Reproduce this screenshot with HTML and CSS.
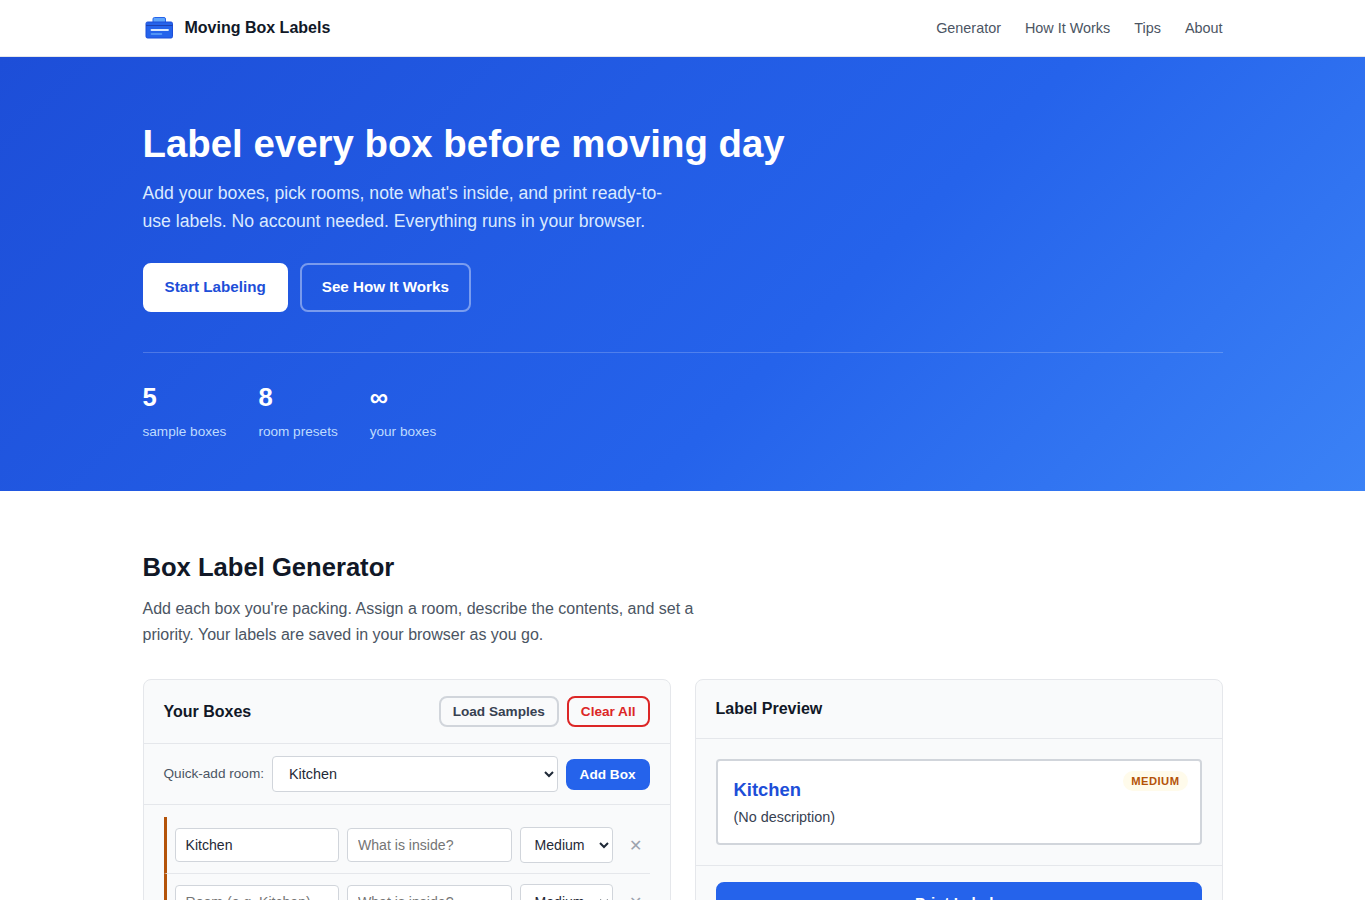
FILE: index.html
```html
<!DOCTYPE html>
<html lang="en">
<head>
  <meta charset="UTF-8">
  <meta name="viewport" content="width=device-width, initial-scale=1.0">
  <title>Moving Box Labels</title>
  <link rel="stylesheet" href="styles.css">
</head>
<body>
  <header class="site-header">
    <div class="container header-inner">
      <a class="logo" href="#">
        <svg width="32" height="32" viewBox="0 0 32 32" fill="none" aria-hidden="true">
          <rect x="10" y="5.5" width="12.5" height="6" rx="1.5" fill="#60a5fa" stroke="#2563eb"/>
          <rect x="3" y="10" width="26.5" height="16" rx="1.5" fill="#2563eb" stroke="#1d4ed8"/>
          <path d="M3 13.5h26.500" stroke="#1e40af"/>
          <path d="M8.500 18h16.500" stroke="#dbeafe" stroke-width="1.800" stroke-linecap="round"/>
          <path d="M8.500 22h10" stroke="#60a5fa" stroke-width="1.500" stroke-linecap="round"/>
        </svg>
        <span>Moving Box Labels</span>
      </a>
      <nav class="site-nav">
        <a href="#generator">Generator</a>
        <a href="#how">How It Works</a>
        <a href="#tips">Tips</a>
        <a href="#about">About</a>
      </nav>
    </div>
  </header>

  <section class="hero">
    <div class="container">
      <h1>Label every box before moving day</h1>
      <p class="hero-text">Add your boxes, pick rooms, note what's inside, and print ready-to-use labels. No account needed. Everything runs in your browser.</p>
      <div class="hero-actions">
        <a class="btn btn-white" href="#generator">Start Labeling</a>
        <a class="btn btn-ghost" href="#how">See How It Works</a>
      </div>
      <div class="hero-stats">
        <div class="stat"><strong>5</strong><span>sample boxes</span></div>
        <div class="stat"><strong>8</strong><span>room presets</span></div>
        <div class="stat"><strong>∞</strong><span>your boxes</span></div>
      </div>
    </div>
  </section>

  <section class="generator" id="generator">
    <div class="container">
      <h2>Box Label Generator</h2>
      <p class="section-text">Add each box you're packing. Assign a room, describe the contents, and set a priority. Your labels are saved in your browser as you go.</p>

      <div class="columns">
        <div class="panel">
          <div class="panel-header">
            <h3>Your Boxes</h3>
            <div class="panel-actions">
              <button class="btn btn-small btn-outline">Load Samples</button>
              <button class="btn btn-small btn-danger">Clear All</button>
            </div>
          </div>
          <div class="quick-add">
            <label for="quick-room">Quick-add room:</label>
            <select id="quick-room">
              <option>Kitchen</option>
              <option>Bedroom</option>
              <option>Bathroom</option>
            </select>
            <button class="btn btn-small btn-primary">Add Box</button>
          </div>
          <div class="box-list">
            <div class="box-row">
              <input type="text" value="Kitchen" placeholder="Room (e.g. Kitchen)">
              <input type="text" placeholder="What is inside?">
              <select>
                <option>High</option>
                <option selected>Medium</option>
                <option>Low</option>
              </select>
              <button class="remove" aria-label="Remove box">✕</button>
            </div>
            <div class="box-row">
              <input type="text" placeholder="Room (e.g. Kitchen)">
              <input type="text" placeholder="What is inside?">
              <select>
                <option>High</option>
                <option selected>Medium</option>
                <option>Low</option>
              </select>
              <button class="remove" aria-label="Remove box">✕</button>
            </div>
          </div>
        </div>

        <div class="panel">
          <div class="panel-header">
            <h3>Label Preview</h3>
          </div>
          <div class="preview">
            <div class="label-card">
              <span class="badge">Medium</span>
              <div class="label-room">Kitchen</div>
              <div class="label-desc">(No description)</div>
            </div>
          </div>
          <div class="panel-footer">
            <button class="btn btn-primary btn-block">Print Labels</button>
          </div>
        </div>
      </div>
    </div>
  </section>
</body>
</html>
```
FILE: styles.css
```css
* {
  box-sizing: border-box;
  margin: 0;
  padding: 0;
}
html, body {
  height: 100%;
}
body {
  font-family: "Liberation Sans", Arial, sans-serif;
  font-size: 16px;
  line-height: 1.6;
  color: #111827;
  background: #fff;
  overflow: hidden;
}
a {
  text-decoration: none;
}
.container {
  max-width: 1120px;
  margin: 0 auto;
  padding: 0 20px;
}

/* header */
.site-header {
  background: #fff;
  border-bottom: 1px solid #e5e7eb;
}
.header-inner {
  display: flex;
  align-items: center;
  justify-content: space-between;
  height: 56px;
}
.logo {
  display: flex;
  align-items: center;
  gap: 10px;
  font-weight: 700;
  color: #111827;
}
.site-nav {
  display: flex;
  gap: 24px;
  padding-top: 1px;
}
.site-nav a {
  font-size: 14.4px;
  color: #4b5563;
}

/* hero */
.hero {
  padding: 64px 0 48px;
  color: #fff;
  background: linear-gradient(135deg, #1d4ed8 0%, #2563eb 60%, #3b82f6 100%);
}
.hero h1 {
  font-size: 38.4px;
  line-height: 1.2;
  margin-bottom: 12px;
}
.hero-text {
  max-width: 540px;
  font-size: 17.6px;
  margin-bottom: 28px;
  color: #dbeafe;
}
.hero-actions {
  display: flex;
  gap: 12px;
  margin-bottom: 40px;
}
.hero-stats {
  display: flex;
  gap: 32px;
  padding-top: 24px;
  border-top: 1px solid rgba(255, 255, 255, 0.2);
}
.stat strong {
  display: block;
  font-size: 25.6px;
}
.stat span {
  font-size: 13.6px;
  color: #bfdbfe;
}

/* buttons */
.btn {
  display: inline-block;
  padding: 10px 20px;
  font-family: inherit;
  font-size: 15.2px;
  font-weight: 600;
  line-height: 1.6;
  text-align: center;
  border: 2px solid transparent;
  border-radius: 8px;
  cursor: pointer;
}
.btn-white {
  color: #1d4ed8;
  background: #fff;
  border-color: #fff;
}
.btn-ghost {
  color: #fff;
  border-color: rgba(255, 255, 255, 0.4);
}
.btn-small {
  padding: 6px 12px;
  font-size: 13.6px;
  line-height: 15px;
}
.btn-outline {
  color: #374151;
  background: transparent;
  border-color: #d1d5db;
}
.btn-danger {
  color: #dc2626;
  background: transparent;
  border-color: #dc2626;
}
.btn-primary {
  color: #fff;
  background: #2563eb;
  border-color: #2563eb;
}
.btn-block {
  display: block;
  width: 100%;
  line-height: 18px;
}

/* generator */
.generator {
  padding: 56px 0;
}
.generator h2 {
  font-size: 25.6px;
  margin-bottom: 8px;
}
.section-text {
  max-width: 560px;
  color: #4b5563;
  margin-bottom: 32px;
}
.columns {
  display: grid;
  grid-template-columns: 1fr 1fr;
  gap: 24px;
  align-items: start;
}
.panel {
  background: #f9fafb;
  border: 1px solid #e5e7eb;
  border-radius: 8px;
}
.panel-header {
  display: flex;
  align-items: center;
  justify-content: space-between;
  padding: 16px 20px;
  border-bottom: 1px solid #e5e7eb;
}
.panel-header h3 {
  font-size: 16px;
}
.panel-actions {
  display: flex;
  gap: 8px;
}
.quick-add {
  display: flex;
  align-items: center;
  gap: 8px;
  padding: 12px 20px;
  border-bottom: 1px solid #e5e7eb;
}
.quick-add label {
  font-size: 13.6px;
  color: #4b5563;
}
.quick-add select {
  flex: 1;
  padding: 0 12px;
}
input, select {
  min-width: 0;
  font-family: inherit;
  font-size: 14.4px;
  color: #1f2937;
  background: #fff;
  border: 1px solid #d1d5db;
  border-radius: 4px;
}
input {
  height: 34px;
  padding: 0 10px;
}
select {
  height: 36px;
  padding: 0 10px;
}
.box-list {
  padding: 12px 20px;
}
.box-row {
  display: grid;
  grid-template-columns: 1fr 1fr 93px 29px;
  gap: 8px;
  align-items: center;
  padding: 10px 0 10px 8px;
  border-left: 3px solid #b45309;
  border-bottom: 1px solid #e5e7eb;
}
.box-row input,
.box-row select {
  font-size: 14.08px;
}
.box-row select {
  padding-right: 0;
}
.remove {
  font-size: 16px;
  color: #9ca3af;
  background: none;
  border: none;
  cursor: pointer;
}

/* preview */
.preview {
  padding: 20px;
}
.label-card {
  position: relative;
  padding: 14px 16px;
  background: #fff;
  border: 2px solid #d1d5db;
  border-radius: 4px;
}
.label-room {
  font-size: 18.4px;
  font-weight: 700;
  color: #1d4ed8;
  margin-bottom: 2px;
}
.label-desc {
  font-size: 14.4px;
  color: #374151;
}
.badge {
  position: absolute;
  top: 10px;
  right: 12px;
  padding: 2px 8px;
  font-size: 11.2px;
  font-weight: 700;
  line-height: 16px;
  letter-spacing: 0.5px;
  text-transform: uppercase;
  color: #b45309;
  background: #fffbeb;
  border-radius: 10px;
}
.panel-footer {
  padding: 16px 20px;
  border-top: 1px solid #e5e7eb;
}
```
